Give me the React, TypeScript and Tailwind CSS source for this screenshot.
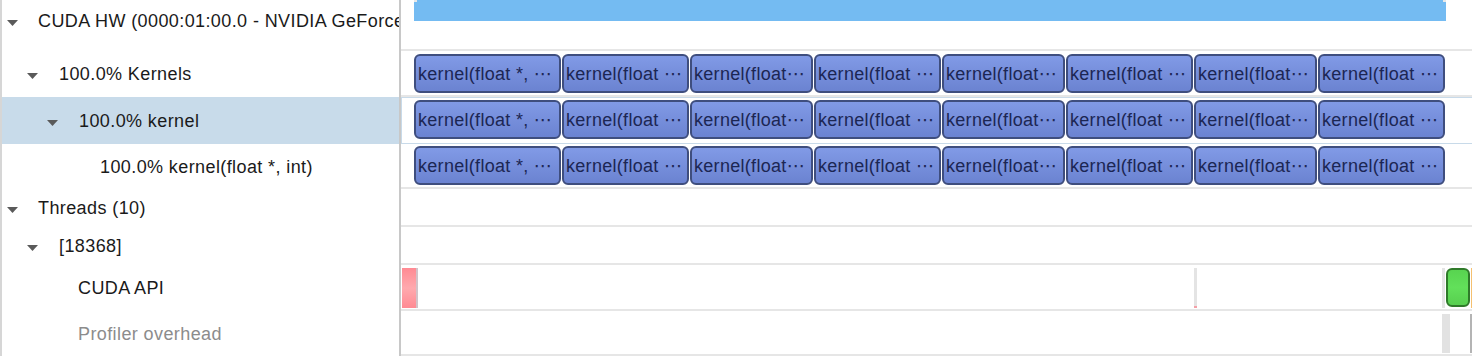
import React from "react";

const font = { fontFamily: '"Liberation Sans", "DejaVu Sans", sans-serif' };

const Arrow = () => (
  <svg width="11" height="6" viewBox="0 0 11 6" className="shrink-0 translate-y-[2px]">
    <polygon points="0,0 11,0 5.5,6" fill="#5a5a5a" />
  </svg>
);

// kernel launches on the timeline: wide first one, then alternating widths
const kernels = [
  { w: "w-[147px]", label: "kernel(float *, ⋯" },
  { w: "w-[127px]", label: "kernel(float ⋯" },
  { w: "w-[123px]", label: "kernel(float⋯" },
  { w: "w-[127px]", label: "kernel(float ⋯" },
  { w: "w-[123px]", label: "kernel(float⋯" },
  { w: "w-[127px]", label: "kernel(float ⋯" },
  { w: "w-[123px]", label: "kernel(float⋯" },
  { w: "w-[127px]", label: "kernel(float ⋯" },
];

const KernelRow = () => (
  <div className="flex gap-[1px]">
    {kernels.map((k, i) => (
      <div
        key={i}
        className={`${k.w} h-[39px] shrink-0 rounded-[6px] border-2 border-[#3f4e7e] bg-gradient-to-b from-[#819ae6] to-[#6b83d1] pl-[2px] flex items-center overflow-hidden whitespace-nowrap text-[18px] leading-[22px] tracking-[0.3px] text-[#1c2653]`}
      >
        {k.label}
      </div>
    ))}
  </div>
);

export default function App() {
  return (
    <div className="w-[1472px] h-[356px] bg-white overflow-hidden flex flex-col text-[#1a1a1a]" style={font}>
      {/* CUDA HW */}
      <div className="flex h-[51px] shrink-0">
        <div className="w-[401px] shrink-0 border-x-2 border-l-[#d6d6d6] border-r-[#c8c8c8] pt-[10px] pl-[5px] overflow-hidden whitespace-nowrap text-[18px] leading-[22px] tracking-[0.4px]">
          <div className="flex items-center h-[22px]">
            <Arrow />
            <span className="ml-[20px]">CUDA HW (0000:01:00.0 - NVIDIA GeForce RTX 3060)</span>
          </div>
        </div>
        <div className="flex-1 border-b-2 border-[#e6e6e6] pl-[13px]">
          <div className="relative w-[1032px] h-[21px] bg-[#74bbf2]">
            <span className="absolute left-0 top-0 w-[3px] h-[2px] bg-[#e8e8e8]" />
            <span className="absolute right-0 top-0 w-[3px] h-[2px] bg-[#e8e8e8]" />
          </div>
        </div>
      </div>

      {/* Kernels */}
      <div className="flex h-[46px] shrink-0">
        <div className="w-[401px] shrink-0 border-x-2 border-l-[#d6d6d6] border-r-[#c8c8c8] flex items-center pl-[25px] overflow-hidden whitespace-nowrap text-[18px] leading-[22px] tracking-[0.4px]">
          <Arrow />
          <span className="ml-[21px]">100.0% Kernels</span>
        </div>
        <div className="flex-1 border-b-2 border-[#e6e6e6] pl-[13px] pt-[3px]">
          <KernelRow />
        </div>
      </div>

      {/* kernel (selected) */}
      <div className="flex h-[47px] shrink-0">
        <div className="w-[401px] shrink-0 border-x-2 border-l-[#d6d6d6] border-r-[#c8c8c8] bg-[#c8dbea] flex items-center pl-[45px] overflow-hidden whitespace-nowrap text-[18px] leading-[22px] tracking-[0.4px]">
          <Arrow />
          <span className="ml-[21px]">100.0% kernel</span>
        </div>
        <div className="flex-1 border-y border-l border-[#c8dae9] pl-[12px] pt-[2px]">
          <KernelRow />
        </div>
      </div>

      {/* kernel(float *, int) */}
      <div className="flex h-[45px] shrink-0">
        <div className="w-[401px] shrink-0 border-x-2 border-l-[#d6d6d6] border-r-[#c8c8c8] flex items-center pl-[98px] overflow-hidden whitespace-nowrap text-[18px] leading-[22px] tracking-[0.4px]">
          100.0% kernel(float *, int)
        </div>
        <div className="flex-1 border-b-2 border-[#e6e6e6] pl-[13px] pt-[2px]">
          <KernelRow />
        </div>
      </div>

      {/* Threads */}
      <div className="flex h-[38px] shrink-0">
        <div className="w-[401px] shrink-0 border-x-2 border-l-[#d6d6d6] border-r-[#c8c8c8] flex items-center pl-[5px] overflow-hidden whitespace-nowrap text-[18px] leading-[22px] tracking-[0.4px]">
          <Arrow />
          <span className="ml-[20px]">Threads (10)</span>
        </div>
        <div className="flex-1 border-b-2 border-[#e6e6e6]" />
      </div>

      {/* [18368] */}
      <div className="flex h-[38px] shrink-0">
        <div className="w-[401px] shrink-0 border-x-2 border-l-[#d6d6d6] border-r-[#c8c8c8] flex items-center pl-[25px] overflow-hidden whitespace-nowrap text-[18px] leading-[22px] tracking-[0.4px]">
          <Arrow />
          <span className="ml-[21px]">[18368]</span>
        </div>
        <div className="flex-1 border-b-2 border-[#e6e6e6]" />
      </div>

      {/* CUDA API */}
      <div className="flex h-[46px] shrink-0">
        <div className="w-[401px] shrink-0 border-x-2 border-l-[#d6d6d6] border-r-[#c8c8c8] flex items-center pl-[76px] overflow-hidden whitespace-nowrap text-[18px] leading-[22px] tracking-[0.4px]">
          CUDA API
        </div>
        <div className="relative flex-1 border-b-2 border-[#e6e6e6]">
          <div className="absolute left-[1px] top-[3px] w-[14px] h-[40px] bg-gradient-to-b from-[#ff8a93] via-[#ffa9ae] to-[#ff8a93]" />
          <div className="absolute left-[15px] top-[3px] w-[2px] h-[40px] bg-[#d2c2c8]" />
          <div className="absolute left-[793px] top-[3px] w-[3px] h-[40px] bg-[#e4e4e4]">
            <div className="absolute bottom-0 left-0 w-full h-[2px] bg-[#f4a0a8]" />
          </div>
          <div className="absolute left-[1041px] top-[3px] w-[3px] h-[40px] bg-[#e4e4e4]" />
          <div className="absolute left-[1045px] top-[3px] w-[24px] h-[39px] rounded-[6px] border-2 border-[#2f7a2a] bg-gradient-to-b from-[#58d450] via-[#62e05a] to-[#58cf50]" />
          <div className="absolute left-[1070px] top-[3px] w-[1px] h-[40px] bg-[#f5c070]" />
        </div>
      </div>

      {/* Profiler overhead */}
      <div className="flex h-[45px] shrink-0">
        <div className="w-[401px] shrink-0 border-x-2 border-l-[#d6d6d6] border-r-[#c8c8c8] flex items-center pl-[76px] overflow-hidden whitespace-nowrap text-[18px] leading-[22px] tracking-[0.4px] text-[#8c8c8c]">
          Profiler overhead
        </div>
        <div className="relative flex-1 border-b-2 border-[#e6e6e6]">
          <div className="absolute left-[1041px] top-[3px] w-[8px] h-[39px] bg-[#e2e2e2]" />
          <div className="absolute left-[1069px] top-[3px] w-[2px] h-[39px] bg-[#b4b4b4]" />
        </div>
      </div>
    </div>
  );
}
